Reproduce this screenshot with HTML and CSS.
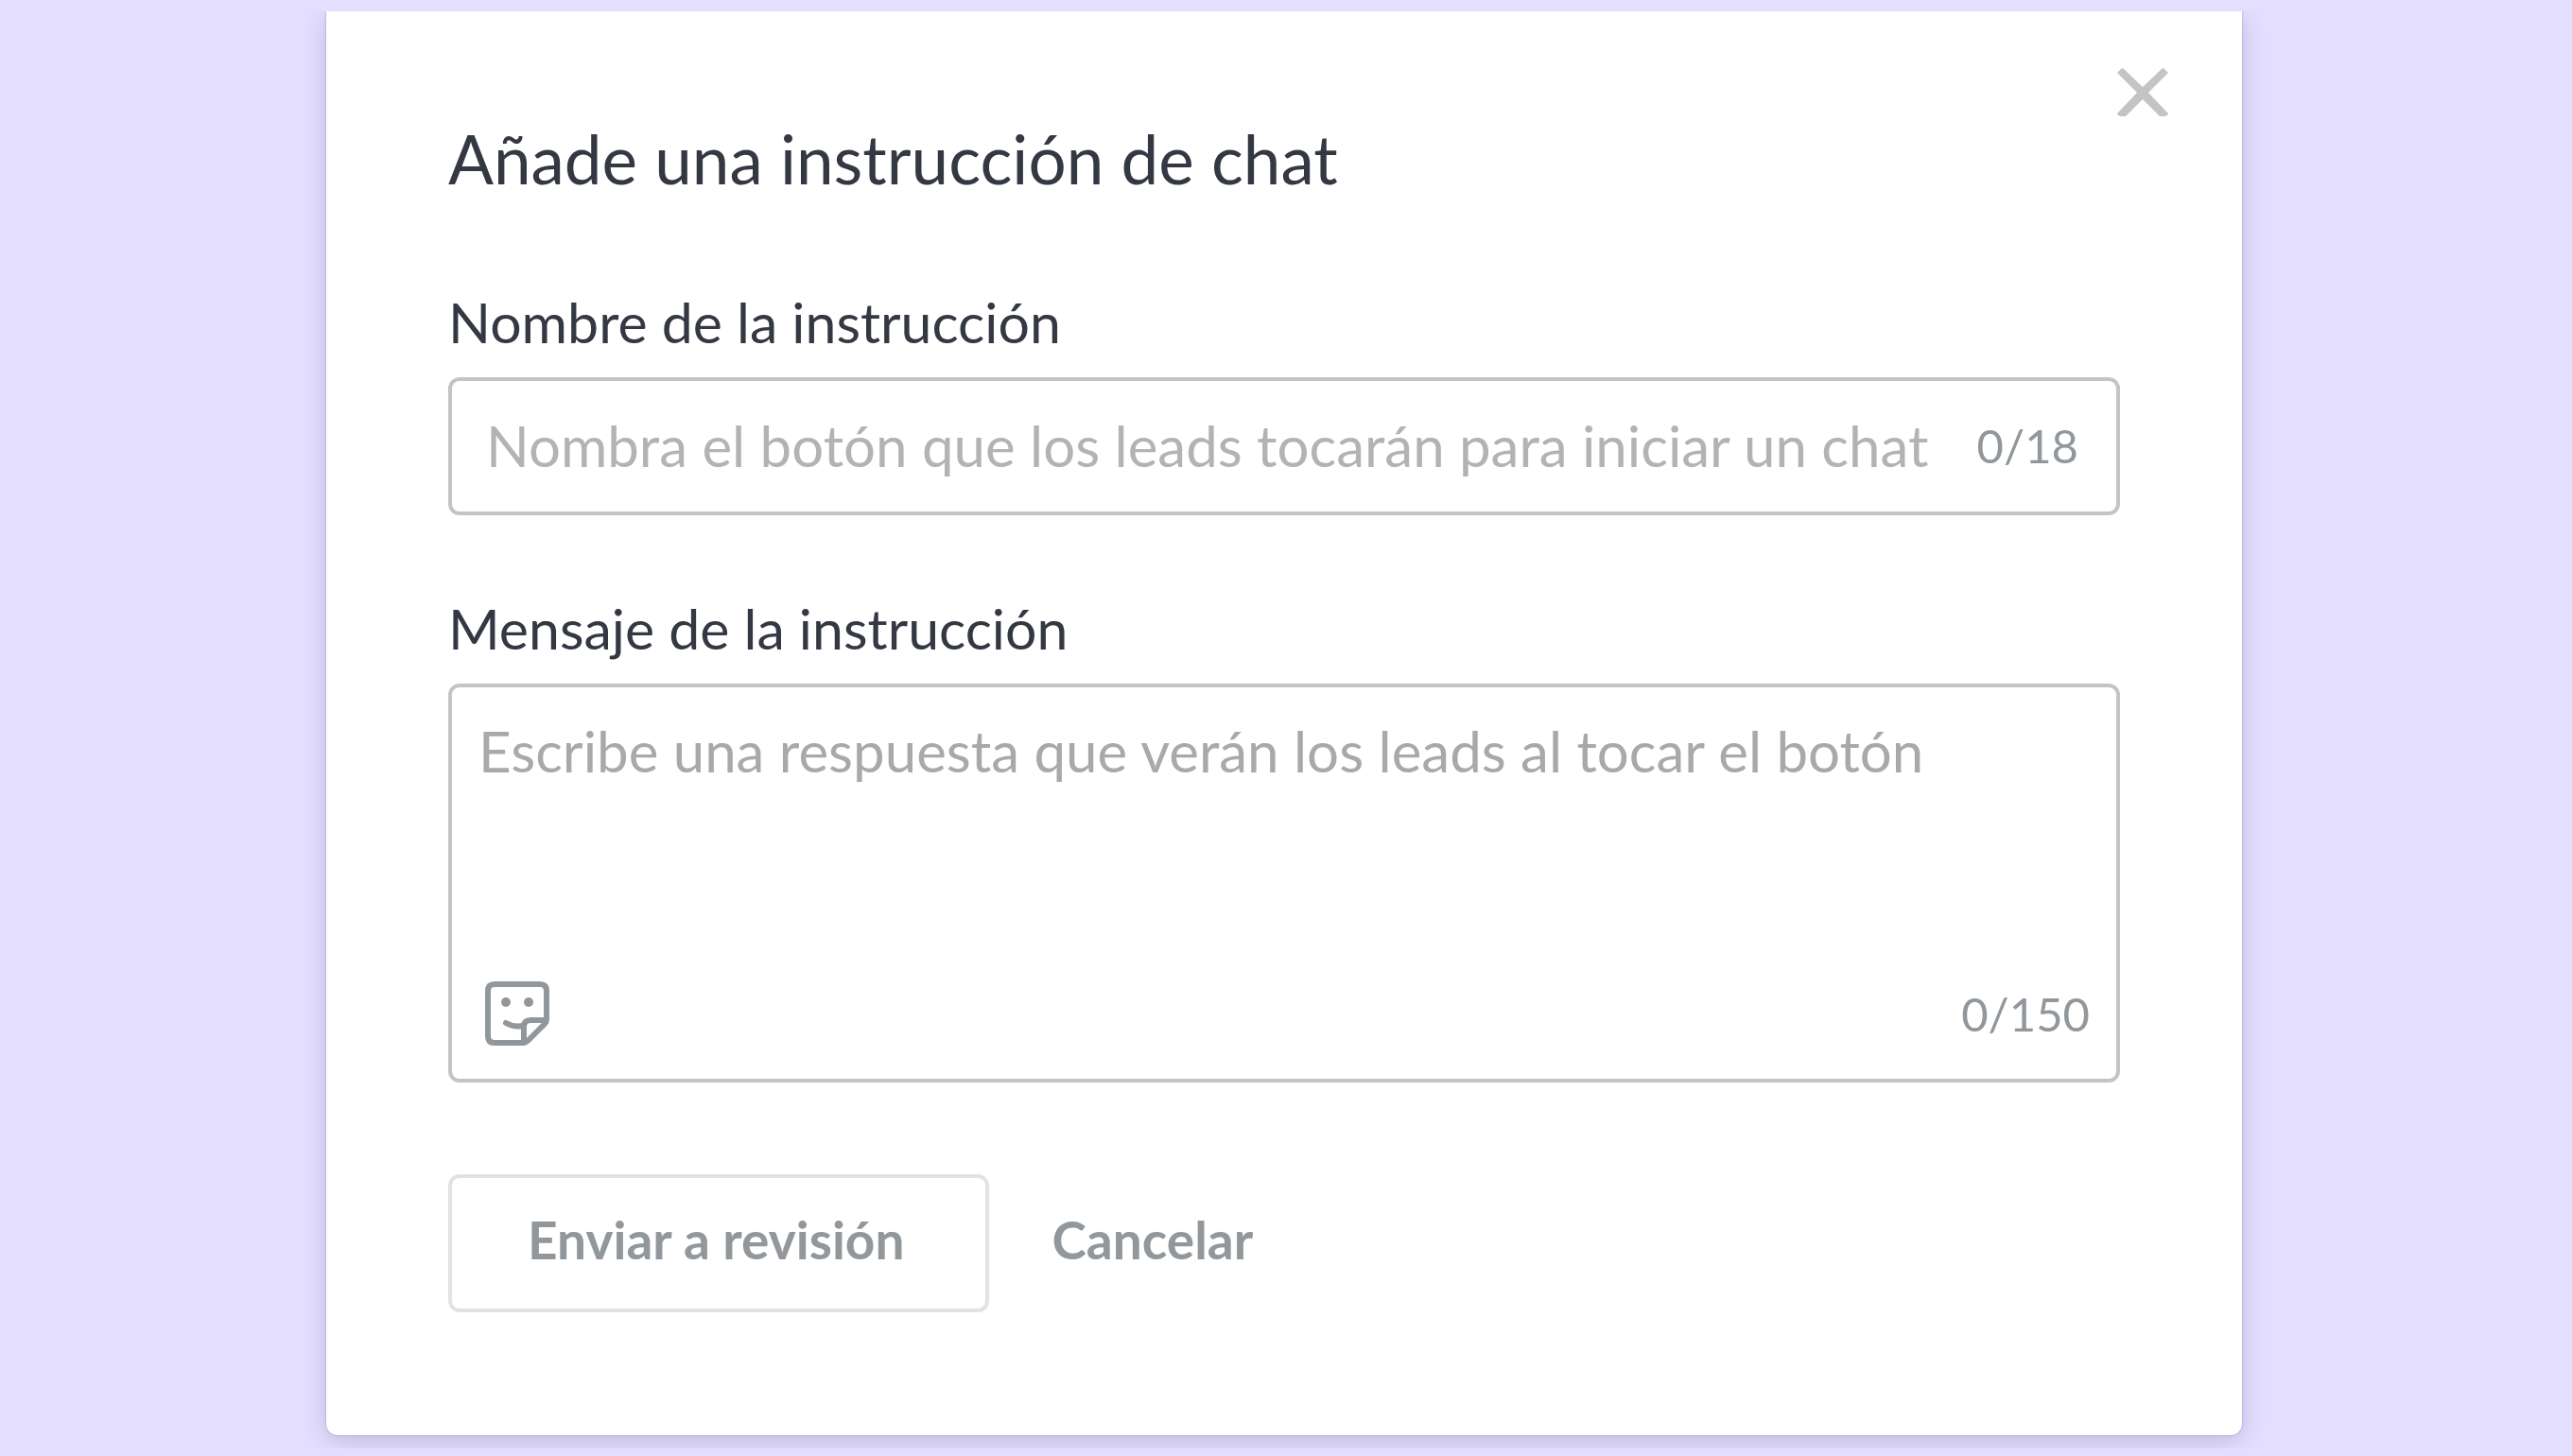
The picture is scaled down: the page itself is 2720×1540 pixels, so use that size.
FILE: index.html
```html
<!DOCTYPE html>
<html lang="es">
<head>
<meta charset="utf-8">
<meta name="viewport" content="width=device-width, initial-scale=1">
<title>Añade una instrucción de chat</title>
<link rel="stylesheet" href="styles.css">
</head>
<body>
<main class="stage">
  <form class="dialog" role="dialog" aria-labelledby="dialog-title">
    <button class="close" type="button" aria-label="Cerrar">
      <svg class="close-icon" viewBox="0 0 54 52" aria-hidden="true">
        <path d="M0 5 5 0H6L27 20 48 0H49L54 5 33 26 54 48V49L51 51H45L27 33 9 51H3L0 49V48L21 26Z"/>
      </svg>
    </button>
    <h1 class="title" id="dialog-title">Añade una instrucción de chat</h1>
    <div class="field">
      <label class="label" for="name">Nombre de la instrucción</label>
      <div class="box box-line">
        <input class="input" id="name" type="text" placeholder="Nombra el botón que los leads tocarán para iniciar un chat">
        <span class="counter">0/18</span>
      </div>
    </div>
    <div class="field">
      <label class="label" for="message">Mensaje de la instrucción</label>
      <div class="box box-area">
        <textarea class="textarea" id="message" placeholder="Escribe una respuesta que verán los leads al tocar el botón"></textarea>
        <div class="toolbar">
          <button class="sticker" type="button" aria-label="Insertar sticker">
            <svg class="sticker-icon" viewBox="0 0 68 68" aria-hidden="true">
              <g fill="none" stroke="currentColor" stroke-width="6" stroke-linejoin="round" stroke-linecap="round">
                <path d="M10 3H58Q65 3 65 10V40Q65 43 63 45L46 62Q43 65 40 65H10Q3 65 3 58V10Q3 3 10 3Z"/>
                <path d="M41 64V48Q41 41 48 41H64"/>
                <path d="M22 44Q31 49 40 47"/>
              </g>
              <circle cx="22" cy="22" r="5" fill="currentColor"/>
              <circle cx="46" cy="22" r="5" fill="currentColor"/>
            </svg>
          </button>
          <span class="counter">0/150</span>
        </div>
      </div>
    </div>
    <div class="actions">
      <button class="button button-outline" type="submit">Enviar a revisión</button>
      <button class="button" type="button">Cancelar</button>
    </div>
  </form>
</main>
</body>
</html>
```
FILE: styles.css
```css
* {
  box-sizing: border-box;
}

body {
  margin: 0;
  padding: 12px 0 8px;
  background: #e4dfff;
  color: #343842;
  font-family: Lato, "Noto Sans", sans-serif;
}

/* The stage cuts the shadow off above and below the dialog. */
.stage {
  display: flex;
  justify-content: center;
  padding: 0 4px 14px 0;
  overflow: hidden;
}

.dialog {
  position: relative;
  width: 75%;
  max-width: 2026px;
  padding: 48px 129px 130px;
  border-radius: 0 0 12px 12px;
  background: #fff;
  box-shadow: 0 0 2px rgba(40, 30, 80, 0.4), 0 6px 24px rgba(50, 40, 90, 0.2);
}

.close {
  position: absolute;
  top: 60px;
  right: 78px;
  padding: 0;
  border: 0;
  background: none;
  color: #c4c4c4;
}

.close-icon {
  display: block;
  width: 54px;
  height: 52px;
  fill: currentColor;
}

.title {
  margin: 64px 0 90px;
  font-size: 71px;
  font-weight: 400;
  line-height: 88px;
}

.field {
  margin-bottom: 81px;
}

.label {
  display: block;
  margin-bottom: 19px;
  font-size: 59px;
  line-height: 78px;
}

.box {
  border: 4px solid #c4c4c4;
  border-radius: 12px;
}

.box:focus-within {
  border-color: #7c68ee;
}

.box-line {
  display: flex;
  align-items: center;
  gap: 24px;
  height: 146px;
  padding: 0 40px 2px 36px;
}

.box-area {
  padding: 28px 28px 35px;
}

.input,
.textarea {
  display: block;
  min-width: 0;
  padding: 0;
  border: 0;
  outline: 0;
  background: none;
  color: #343842;
  font: inherit;
  font-size: 60px;
  line-height: 78px;
}

.input {
  flex: 1;
}

.input::placeholder {
  color: #b3b3b3;
}

.textarea {
  width: 100%;
  height: 283px;
  resize: none;
}

.textarea::placeholder {
  color: #a9a9a9;
}

.counter {
  color: #91979b;
  font-size: 49px;
  line-height: 68px;
}

.toolbar {
  display: flex;
  align-items: center;
  justify-content: space-between;
}

.sticker {
  padding: 0 7px;
  border: 0;
  background: none;
  color: #91979b;
}

.sticker-icon {
  display: block;
  width: 68px;
  height: 68px;
}

.actions {
  display: flex;
  gap: 66px;
  margin-top: 97px;
}

.button {
  height: 146px;
  padding: 0 0 8px;
  border: 0;
  background: none;
  color: #91979b;
  font: inherit;
  font-size: 55px;
  font-weight: 700;
}

.button-outline {
  padding: 0 86px 8px 80px;
  border: 4px solid #e2e2e2;
  border-radius: 12px;
}
```
